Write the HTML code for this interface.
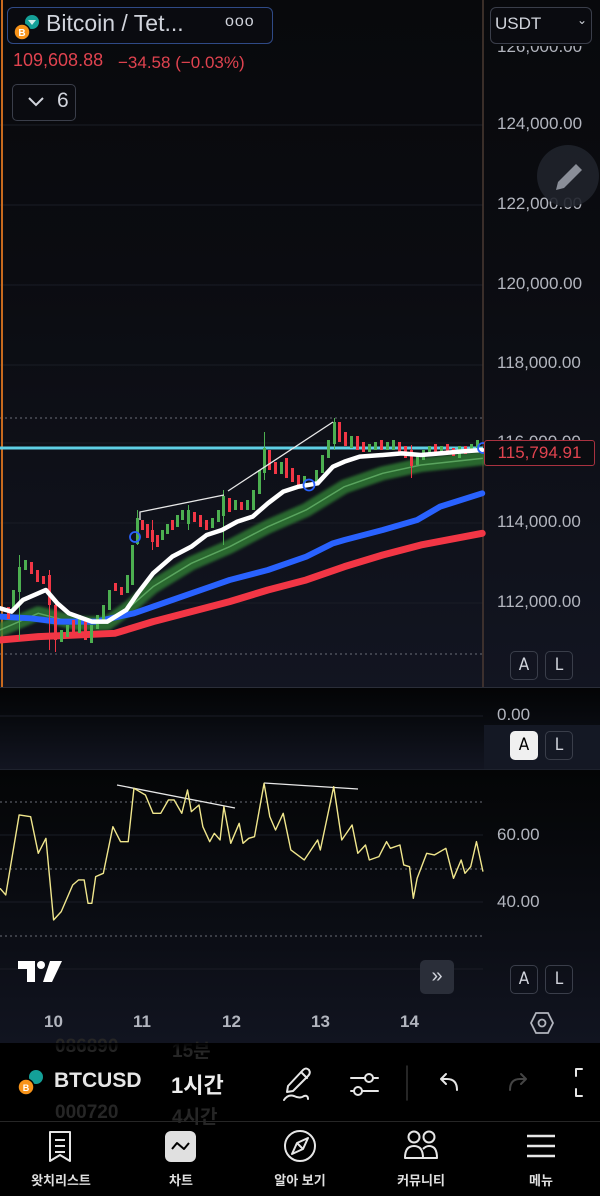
<!DOCTYPE html>
<html><head><meta charset="utf-8">
<style>
*{margin:0;padding:0;box-sizing:border-box}
body{width:600px;height:1196px;background:#000;overflow:hidden;position:relative;font-family:"Liberation Sans","Noto Sans CJK KR",sans-serif;color:#d1d4dc}
.abs{position:absolute}
.pl{position:absolute;left:497px;font-size:17px;color:#b2b5be}
.btn{position:absolute;width:28px;height:29px;border:1px solid #3a3e4a;border-radius:5px;font-size:17px;color:#d1d4dc;text-align:center;line-height:27px;font-family:"DejaVu Sans Condensed","Liberation Sans",sans-serif}
.tl{position:absolute;top:1012px;font-size:17px;font-weight:bold;color:#b2b5be}
.nav{position:absolute;top:1170px;font-size:13px;font-weight:bold;color:#e0e0e0;text-align:center;width:100px}
</style></head><body>
<div class="abs" style="left:0;top:0;width:600px;height:687px;background:linear-gradient(#08090c 0%,#0b0c11 40%,#121521 100%)"></div>
<div class="abs" style="left:0;top:688px;width:600px;height:81px;background:linear-gradient(#030405 0%,#080a0f 40%,#121521 100%)"></div>
<div class="abs" style="left:0;top:770px;width:600px;height:273px;background:linear-gradient(#040506 0%,#0a0c12 50%,#111420 100%)"></div>
<div class="abs" style="left:0;top:687px;width:600px;height:1px;background:#2a2e39"></div>
<div class="abs" style="left:0;top:769px;width:600px;height:1px;background:#1e222d"></div>

<svg class="abs" style="left:0;top:0" width="600" height="1043">
<defs>
<filter id="g" x="-10%" y="-50%" width="120%" height="200%"><feGaussianBlur stdDeviation="4"/></filter>
</defs>
<g stroke="#1a1d26" stroke-width="1">
<line x1="0" y1="125" x2="483" y2="125"/><line x1="0" y1="205" x2="483" y2="205"/>
<line x1="0" y1="285" x2="483" y2="285"/><line x1="0" y1="365" x2="483" y2="365"/>
<line x1="0" y1="443" x2="483" y2="443"/><line x1="0" y1="523" x2="483" y2="523"/>
<line x1="0" y1="603" x2="483" y2="603"/>
<line x1="0" y1="716" x2="483" y2="716"/>
<line x1="0" y1="835" x2="483" y2="835"/><line x1="0" y1="902" x2="483" y2="902"/>
<line x1="0" y1="969" x2="483" y2="969"/>
</g>
<g stroke="#6a6e78" stroke-width="1" stroke-dasharray="2,3">
<line x1="0" y1="418" x2="483" y2="418"/><line x1="0" y1="654" x2="483" y2="654"/>
<line x1="0" y1="802" x2="483" y2="802"/><line x1="0" y1="869" x2="483" y2="869"/><line x1="0" y1="936" x2="483" y2="936"/>
</g>
<line x1="2" y1="0" x2="2" y2="687" stroke="#c86a1e" stroke-width="2"/>
<line x1="483" y1="0" x2="483" y2="687" stroke="#4a3a32" stroke-width="1.5"/>
<line x1="0" y1="448" x2="483" y2="448" stroke="#5fd0e6" stroke-width="3"/>
<g transform="translate(0,400) scale(0.3827,0.3333)" fill="none" stroke-linejoin="round" stroke-linecap="round">
<polyline filter="url(#g)" vector-effect="non-scaling-stroke" stroke="#2e7d32" stroke-opacity="0.8" stroke-width="14" points="0,690 100,640 200,670 280,670 340,620 400,560 500,490 600,440 700,380 800,330 900,260 1000,220 1100,195 1260,175"/>
<polyline vector-effect="non-scaling-stroke" stroke="#6fbf73" stroke-opacity="0.7" stroke-width="1.5" points="0,690 100,640 200,670 280,670 340,620 400,560 500,490 600,440 700,380 800,330 900,260 1000,220 1100,195 1260,175"/>
<polyline vector-effect="non-scaling-stroke" stroke="#f23645" stroke-width="7" points="0,720 100,710 200,705 300,700 400,665 500,635 600,605 700,570 800,540 900,500 1000,465 1100,435 1260,400"/>
<polyline vector-effect="non-scaling-stroke" stroke="#2962ff" stroke-width="6" points="0,650 80,655 150,665 250,665 350,640 450,600 550,560 600,540 700,510 800,470 870,430 900,420 1000,390 1090,360 1150,320 1260,280"/>
</g>
<g>
<rect x="7" y="607" width="3" height="12" fill="#f23645"/>
<rect x="12" y="590" width="3" height="20" fill="#4caf50"/>
<rect x="18" y="567" width="3" height="25" fill="#4caf50"/><line x1="19.5" y1="555" x2="19.5" y2="640" stroke="#4caf50"/>
<rect x="24" y="560" width="3" height="10" fill="#4caf50"/>
<rect x="30" y="562" width="3" height="12" fill="#f23645"/>
<rect x="36" y="570" width="3" height="12" fill="#f23645"/>
<rect x="42" y="576" width="3" height="8" fill="#f23645"/>
<rect x="48" y="575" width="3" height="30" fill="#f23645"/><line x1="49.5" y1="570" x2="49.5" y2="650" stroke="#f23645"/>
<rect x="54" y="605" width="3" height="35" fill="#f23645"/><line x1="55.5" y1="600" x2="55.5" y2="652" stroke="#f23645"/>
<rect x="60" y="630" width="3" height="12" fill="#4caf50"/>
<rect x="66" y="625" width="3" height="12" fill="#4caf50"/>
<rect x="72" y="620" width="3" height="15" fill="#f23645"/>
<rect x="78" y="615" width="3" height="18" fill="#4caf50"/>
<rect x="84" y="620" width="3" height="20" fill="#f23645"/>
<rect x="90" y="625" width="3" height="18" fill="#4caf50"/>
<rect x="96" y="615" width="3" height="14" fill="#4caf50"/>
<rect x="102" y="605" width="3" height="16" fill="#4caf50"/>
<rect x="108" y="590" width="3" height="20" fill="#4caf50"/>
<rect x="114" y="583" width="3" height="8" fill="#f23645"/>
<rect x="120" y="587" width="3" height="8" fill="#f23645"/>
<rect x="126" y="575" width="3" height="18" fill="#4caf50"/>
<rect x="131" y="545" width="3" height="40" fill="#4caf50"/>
<rect x="136" y="518" width="3" height="26" fill="#4caf50"/><line x1="137.5" y1="510" x2="137.5" y2="545" stroke="#4caf50"/>
<rect x="141" y="520" width="3" height="10" fill="#f23645"/>
<rect x="146" y="524" width="3" height="14" fill="#f23645"/>
<rect x="151" y="530" width="3" height="12" fill="#f23645"/><line x1="152.5" y1="520" x2="152.5" y2="550" stroke="#f23645"/>
<rect x="156" y="535" width="3" height="12" fill="#f23645"/>
<rect x="161" y="530" width="3" height="10" fill="#4caf50"/>
<rect x="166" y="524" width="3" height="10" fill="#4caf50"/>
<rect x="171" y="520" width="3" height="10" fill="#f23645"/>
<rect x="176" y="515" width="3" height="12" fill="#4caf50"/>
<rect x="181" y="510" width="3" height="10" fill="#4caf50"/>
<rect x="187" y="510" width="3" height="14" fill="#4caf50"/><line x1="188.5" y1="505" x2="188.5" y2="530" stroke="#4caf50"/>
<rect x="193" y="512" width="3" height="10" fill="#f23645"/>
<rect x="199" y="515" width="3" height="12" fill="#f23645"/>
<rect x="205" y="520" width="3" height="10" fill="#f23645"/>
<rect x="211" y="518" width="3" height="10" fill="#4caf50"/>
<rect x="217" y="510" width="3" height="12" fill="#4caf50"/>
<rect x="222" y="496" width="3" height="20" fill="#4caf50"/><line x1="223.5" y1="490" x2="223.5" y2="545" stroke="#4caf50"/>
<rect x="228" y="498" width="3" height="14" fill="#f23645"/>
<rect x="234" y="500" width="3" height="10" fill="#4caf50"/>
<rect x="240" y="502" width="3" height="8" fill="#f23645"/>
<rect x="246" y="500" width="3" height="10" fill="#4caf50"/>
<rect x="252" y="490" width="3" height="20" fill="#4caf50"/>
<rect x="258" y="470" width="3" height="24" fill="#4caf50"/>
<rect x="263" y="448" width="3" height="25" fill="#4caf50"/><line x1="264.5" y1="432" x2="264.5" y2="480" stroke="#4caf50"/>
<rect x="268" y="450" width="3" height="20" fill="#f23645"/>
<rect x="274" y="462" width="3" height="12" fill="#f23645"/>
<rect x="280" y="462" width="3" height="12" fill="#4caf50"/>
<rect x="285" y="458" width="3" height="20" fill="#f23645"/>
<rect x="291" y="468" width="3" height="14" fill="#f23645"/>
<rect x="297" y="475" width="3" height="10" fill="#f23645"/>
<rect x="303" y="476" width="3" height="8" fill="#4caf50"/>
<rect x="315" y="470" width="3" height="12" fill="#4caf50"/>
<rect x="321" y="455" width="3" height="18" fill="#4caf50"/>
<rect x="327" y="440" width="3" height="18" fill="#4caf50"/>
<rect x="333" y="422" width="3" height="22" fill="#4caf50"/><line x1="334.5" y1="418" x2="334.5" y2="450" stroke="#4caf50"/>
<rect x="338" y="422" width="3" height="20" fill="#f23645"/>
<rect x="344" y="432" width="3" height="14" fill="#f23645"/>
<rect x="350" y="436" width="3" height="12" fill="#4caf50"/>
<rect x="356" y="436" width="3" height="14" fill="#f23645"/>
<rect x="362" y="442" width="3" height="10" fill="#f23645"/>
<rect x="368" y="444" width="3" height="8" fill="#4caf50"/>
<rect x="374" y="442" width="3" height="8" fill="#4caf50"/>
<rect x="380" y="440" width="3" height="10" fill="#f23645"/>
<rect x="386" y="442" width="3" height="8" fill="#4caf50"/>
<rect x="392" y="440" width="3" height="10" fill="#4caf50"/>
<rect x="398" y="442" width="3" height="10" fill="#f23645"/>
<rect x="404" y="446" width="3" height="12" fill="#f23645"/>
<rect x="410" y="450" width="3" height="16" fill="#f23645"/><line x1="411.5" y1="445" x2="411.5" y2="478" stroke="#f23645"/>
<rect x="416" y="455" width="3" height="10" fill="#4caf50"/>
<rect x="422" y="450" width="3" height="10" fill="#4caf50"/>
<rect x="428" y="446" width="3" height="8" fill="#4caf50"/>
<rect x="434" y="444" width="3" height="8" fill="#f23645"/>
<rect x="440" y="446" width="3" height="8" fill="#4caf50"/>
<rect x="446" y="444" width="3" height="8" fill="#f23645"/>
<rect x="452" y="448" width="3" height="8" fill="#f23645"/>
<rect x="458" y="446" width="3" height="12" fill="#4caf50"/>
<rect x="464" y="446" width="3" height="8" fill="#f23645"/>
<rect x="470" y="444" width="3" height="8" fill="#4caf50"/>
<rect x="476" y="440" width="3" height="10" fill="#4caf50"/>
</g>
<g transform="translate(0,400) scale(0.3827,0.3333)" fill="none" stroke-linejoin="round" stroke-linecap="round">
<polyline vector-effect="non-scaling-stroke" stroke="#ffffff" stroke-width="4.5" points="0,625 30,635 60,600 120,570 150,610 180,640 240,665 280,665 330,630 360,580 400,520 450,470 500,440 540,405 580,390 620,365 660,350 700,310 740,275 780,260 830,250 870,200 900,185 940,170 1000,165 1050,160 1100,165 1150,160 1200,155 1260,150"/>
</g>
<g stroke="#e8e8e8" stroke-width="1.3" fill="none">
<polyline points="140,520 140,512 224,495"/>
<line x1="228" y1="491" x2="333" y2="422"/>
<line x1="117" y1="785" x2="235" y2="808"/>
<line x1="264" y1="783" x2="358" y2="789"/>
</g>
<g fill="none" stroke="#2962ff" stroke-width="1.8">
<circle cx="135" cy="537" r="5"/><circle cx="309" cy="485" r="5.5"/><circle cx="483" cy="448" r="5"/>
</g>
<g transform="translate(0,640) scale(0.3827,0.3333)" fill="none" stroke-linejoin="round">
<polyline vector-effect="non-scaling-stroke" stroke="#f0e68c" stroke-width="1.4" points="0,745 15,765 50,525 80,530 100,640 120,595 140,840 160,815 190,735 205,720 220,720 230,790 240,790 250,710 270,700 295,560 315,605 335,605 350,445 380,465 400,520 420,520 440,480 455,480 475,520 490,450 500,515 520,495 530,560 548,605 560,580 575,600 585,500 603,610 625,550 635,610 650,595 665,590 690,430 705,530 720,570 740,520 760,630 795,660 830,600 837,630 872,440 893,600 920,555 935,640 955,615 965,660 990,650 1010,605 1020,625 1045,615 1055,675 1070,680 1080,775 1090,715 1115,640 1135,645 1165,625 1185,715 1205,660 1215,700 1230,680 1245,605 1262,695"/>
</g>
<g fill="#ffffff">
<path d="M18 961 H35 V982 H27 V969 H18 Z"/>
<circle cx="41" cy="965" r="4"/>
<path d="M50 961 H62 L52 982 H43 Z"/>
</g>
</svg>

<div class="abs" style="left:7px;top:7px;width:266px;height:37px;border:1.5px solid #2f4a86;border-radius:6px;background:#0a0b10"></div>
<svg class="abs" style="left:12px;top:12px" width="30" height="30">
<circle cx="20" cy="10" r="7" fill="#14a098"/><path d="M16 8 h8 l-4 5z" fill="#fff" opacity=".8"/>
<circle cx="10" cy="20" r="8" fill="#f7931a" stroke="#0a0b10" stroke-width="1.5"/>
<text x="10" y="24" font-size="10" font-weight="bold" fill="#fff" text-anchor="middle" font-family="Liberation Sans">B</text>
</svg>
<div class="abs" style="left:46px;top:10px;font-size:23px;color:#d1d4dc">Bitcoin / Tet...</div>
<div class="abs" style="left:225px;top:13px;font-size:16px;letter-spacing:1px;color:#d1d4dc">ooo</div>
<div class="abs" style="left:490px;top:7px;width:102px;height:37px;border:1px solid #3a3e4a;border-radius:6px;background:#0a0b10"></div>
<div class="abs" style="left:495px;top:14px;font-size:17px;color:#d1d4dc">USDT</div>
<div class="abs" style="left:577px;top:13px;font-size:12px;color:#d1d4dc">⌄</div>
<div class="pl" style="top:37px;clip-path:inset(9px 0 0 0)">126,000.00</div>
<div class="abs" style="left:13px;top:50px;font-size:18px;color:#e0434f">109,608.88</div>
<div class="abs" style="left:118px;top:53px;font-size:17px;color:#e0434f">−34.58 (−0.03%)</div>
<div class="abs" style="left:12px;top:84px;width:64px;height:37px;border:1px solid #3a3e4a;border-radius:5px;background:#0a0b10"></div>
<svg class="abs" style="left:27px;top:96px" width="18" height="12"><path d="M2 2 L9 9 L16 2" stroke="#d1d4dc" stroke-width="2" fill="none"/></svg>
<div class="abs" style="left:57px;top:89px;font-size:21px;color:#d1d4dc">6</div>

<div class="pl" style="top:114px">124,000.00</div>
<div class="pl" style="top:194px">122,000.00</div>
<div class="pl" style="top:274px">120,000.00</div>
<div class="pl" style="top:353px">118,000.00</div>
<div class="pl" style="top:432px">116,000.00</div>
<div class="pl" style="top:512px">114,000.00</div>
<div class="pl" style="top:592px">112,000.00</div>
<div class="abs" style="left:537px;top:145px;width:62px;height:62px;border-radius:31px;background:#1f222b;opacity:.9"></div>
<svg class="abs" style="left:552px;top:160px" width="34" height="34"><path d="M4 30 L6 22 L24 4 L30 10 L12 28 Z" fill="#8a8e98"/></svg>
<div class="abs" style="left:484px;top:440px;width:111px;height:26px;border:1.5px solid #a83240;border-radius:3px;background:#0b0c10;color:#e0434f;font-size:17px;text-align:center;line-height:23px">115,794.91</div>

<div class="btn" style="left:510px;top:651px">A</div>
<div class="btn" style="left:545px;top:651px">L</div>
<div class="pl" style="top:705px;left:497px">0.00</div>
<div class="abs" style="left:484px;top:725px;width:116px;height:44px;background:#141824"></div>
<div class="btn" style="left:510px;top:731px;background:#f0f0f0;color:#000;border-color:#f0f0f0">A</div>
<div class="btn" style="left:545px;top:731px">L</div>
<div class="pl" style="top:825px">60.00</div>
<div class="pl" style="top:892px">40.00</div>
<div class="abs" style="left:420px;top:960px;width:34px;height:34px;border-radius:5px;background:#2a2e39;color:#d1d4dc;font-size:20px;text-align:center;line-height:32px">»</div>
<div class="btn" style="left:510px;top:965px">A</div>
<div class="btn" style="left:545px;top:965px">L</div>
<div class="tl" style="left:44px">10</div>
<div class="tl" style="left:133px">11</div>
<div class="tl" style="left:222px">12</div>
<div class="tl" style="left:311px">13</div>
<div class="tl" style="left:400px">14</div>
<svg class="abs" style="left:530px;top:1011px" width="24" height="24"><path d="M6 2 H18 L23 12 L18 22 H6 L1 12 Z" stroke="#b2b5be" stroke-width="1.8" fill="none"/><circle cx="12" cy="12" r="3.5" stroke="#b2b5be" stroke-width="1.8" fill="none"/></svg>

<div class="abs" style="left:0;top:1043px;width:600px;height:78px;background:#000"></div>
<div class="abs" style="left:55px;top:1036px;font-size:19px;font-weight:bold;color:#262626">086890</div>
<div class="abs" style="left:172px;top:1036px;font-size:19px;font-weight:bold;color:#262626">15분</div>
<div class="abs" style="left:55px;top:1102px;font-size:19px;font-weight:bold;color:#262626">000720</div>
<div class="abs" style="left:172px;top:1102px;font-size:19px;font-weight:bold;color:#262626">4시간</div>
<div class="abs" style="left:0;top:1043px;width:600px;height:8px;background:linear-gradient(#000,rgba(0,0,0,0))"></div>
<svg class="abs" style="left:16px;top:1068px" width="30" height="30">
<circle cx="20" cy="9" r="7" fill="#14a098"/>
<circle cx="10" cy="19" r="8" fill="#f7931a" stroke="#000" stroke-width="1.5"/>
<text x="10" y="23" font-size="9" font-weight="bold" fill="#fff" text-anchor="middle" font-family="Liberation Sans">B</text>
</svg>
<div class="abs" style="left:54px;top:1069px;font-size:21px;font-weight:bold;color:#e6e6e6">BTCUSD</div>
<div class="abs" style="left:171px;top:1068px;font-size:22px;font-weight:bold;color:#ededed">1시간</div>
<svg class="abs" style="left:280px;top:1064px" width="320" height="40" fill="none" stroke="#e6e6e6" stroke-width="2" stroke-linecap="round" stroke-linejoin="round">
<path d="M8 22 L23 6 Q26 3 29 6 Q31 9 28 12 L13 27 L7 28 Z M21 8 L27 14"/>
<path d="M4 36 Q8 30 14 32 Q20 35 24 32 Q28 31 28 35"/>
<path d="M71 14 H98 M71 27 H98"/><circle cx="89" cy="14" r="4" fill="#000"/><circle cx="78" cy="27" r="4" fill="#000"/>
<line x1="127" y1="2" x2="127" y2="36" stroke="#333" stroke-width="1.5"/>
<path d="M177 26 Q177 15 167 15 H161 M166 10 L161 15 L166 20"/>
<path d="M230 26 Q230 15 240 15 H246 M241 10 L246 15 L241 20" stroke="#444"/>
<path d="M302 5 H296 V12 M296 25 V32 H302"/>
</svg>
<div class="abs" style="left:0;top:1121px;width:600px;height:1px;background:#262626"></div>
<svg class="abs" style="left:0;top:1128px" width="600" height="40" fill="none" stroke="#e6e6e6" stroke-width="2" stroke-linejoin="round">
<path d="M50 4 H70 V33 L60 27 L50 33 Z"/><path d="M55 12 H65 M55 18 H65 M55 24 H65"/>
<rect x="165" y="3" width="31" height="31" rx="6" fill="#e0e0e0" stroke="none"/>
<path d="M172 21 L177 15 L184 21 L189 15" stroke="#000" stroke-width="2"/>
<circle cx="300" cy="18" r="15"/><path d="M308 10 L303 21 L292 26 L297 15 Z"/><path d="M303 21 L297 15"/>
<circle cx="414" cy="9" r="5.5"/><circle cx="429" cy="9" r="5.5"/>
<path d="M405 30 Q405 18 414 18 Q423 18 423 30 Z"/><path d="M423 21 Q426 18 429 18 Q437 18 437 30 H423"/>
<path d="M527 8 H555 M527 18 H555 M527 28 H555" stroke-width="2.5"/>
</svg>
<div class="nav" style="left:11px">왓치리스트</div>
<div class="nav" style="left:131px">차트</div>
<div class="nav" style="left:250px">알아 보기</div>
<div class="nav" style="left:371px">커뮤니티</div>
<div class="nav" style="left:491px">메뉴</div>
</body></html>
